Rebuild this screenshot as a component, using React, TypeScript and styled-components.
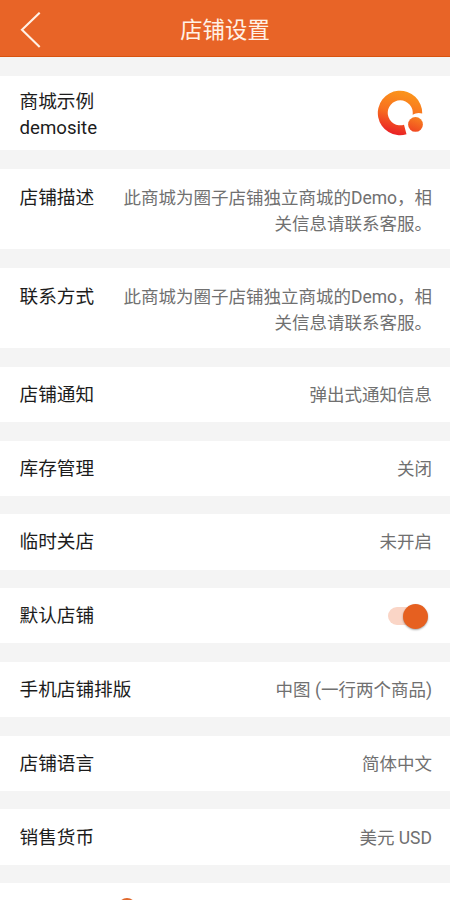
import React from 'react';
import styled, { createGlobalStyle } from 'styled-components';

const GlobalStyle = createGlobalStyle`
  html, body {
    margin: 0;
    height: 900px;
    overflow: hidden;
    background: #f4f4f4;
  }
  body {
    font-family: Roboto, 'Noto Sans CJK SC', sans-serif;
  }
`;

const Screen = styled.div`
  display: flex;
  flex-direction: column;
  width: 450px;
  height: 900px;
  overflow: hidden;
  background: #f4f4f4;
`;

const Header = styled.header`
  display: grid;
  grid-template-columns: 60px 1fr 60px;
  align-items: center;
  flex: none;
  box-sizing: border-box;
  height: 57px;
  padding-top: 4px;
  border-bottom: 1px solid #d8530f;
  background: #e86427;
  color: #fff1e6;
`;

const BackButton = styled.button`
  display: flex;
  padding: 0 0 0 20px;
  border: 0;
  background: none;
  color: inherit;
`;

const Title = styled.h1`
  margin: 0;
  font-size: 22.4px;
  font-weight: 400;
  line-height: 32px;
  text-align: center;
`;

const List = styled.main`
  display: flex;
  flex-direction: column;
  flex: none;
  gap: 18.6px;
  padding-top: 19.2px;
`;

const Row = styled.section<{ $height?: number; $top?: boolean }>`
  display: flex;
  align-items: ${({ $top }) => ($top ? 'flex-start' : 'center')};
  justify-content: space-between;
  gap: 24px;
  box-sizing: border-box;
  height: ${({ $height }) => $height ?? 55.2}px;
  padding: ${({ $top }) => ($top ? '16px' : '1px')} 18px 0 19.5px;
  background: #fff;
`;

const Label = styled.div`
  flex: none;
  font-size: 18.65px;
  line-height: 26px;
  color: #1c1c1c;
`;

const ShopName = styled(Label)`
  padding-top: 2px;
`;

const Value = styled.div`
  font-size: 17.5px;
  line-height: 26px;
  color: #707070;
  text-align: right;
`;

const Logo = styled.svg`
  flex: none;
  margin: 0 9px 2px 0;
`;

const Switch = styled.button`
  display: flex;
  align-items: center;
  margin-right: 4px;
  padding: 0;
  border: 0;
  background: none;
`;

const Track = styled.span`
  width: 28px;
  height: 18px;
  margin-right: -13px;
  border-radius: 9px;
  background: #fad5c6;
`;

const Thumb = styled.span`
  flex: none;
  width: 25px;
  height: 25px;
  border-radius: 50%;
  background: #e66020;
  box-shadow: 0 1px 2px rgba(0, 0, 0, 0.35);
`;

const NextRow = styled(Row)`
  align-items: flex-start;
  padding: 15px 0 0 118px;
`;

const Badge = styled.span`
  width: 18px;
  height: 18px;
  border-radius: 50%;
  background: #e0682c;
`;

const description = '此商城为圈子店铺独立商城的Demo，相关信息请联系客服。';

const settings = [
  ['店铺通知', '弹出式通知信息'],
  ['库存管理', '关闭'],
  ['临时关店', '未开启'],
  ['默认店铺', null],
  ['手机店铺排版', '中图 (一行两个商品)'],
  ['店铺语言', '简体中文'],
  ['销售货币', '美元 USD'],
] as const;

function ShopLogo() {
  return (
    <Logo width="46" height="46" viewBox="0 0 46 46" aria-hidden="true">
      <defs>
        <linearGradient id="ring" x1="0.65" y1="0" x2="0.4" y2="1">
          <stop offset="0" stopColor="#fb971b" />
          <stop offset="0.5" stopColor="#f8711f" />
          <stop offset="1" stopColor="#e91f25" />
        </linearGradient>
        <linearGradient id="dot" x1="0.7" y1="0" x2="0.3" y2="1">
          <stop offset="0" stopColor="#f88220" />
          <stop offset="1" stopColor="#f04521" />
        </linearGradient>
      </defs>
      <path
        d="M45.2 23.5A22.2 22.2 0 1 0 29.5 44.2L27 34.7A12.5 12.5 0 1 1 35.6 24.7Q40 22.2 45.2 23.5Z"
        fill="url(#ring)"
      />
      <circle cx="38.5" cy="34.4" r="7.4" fill="url(#dot)" />
    </Logo>
  );
}

export default function App() {
  return (
    <>
      <GlobalStyle />
      <Screen>
        <Header>
          <BackButton aria-label="返回">
            <svg width="22" height="36" viewBox="0 0 22 36" fill="none" stroke="currentColor" strokeWidth="2.1">
              <path d="M19.7 0.7 2 17.8 19.7 34.9" />
            </svg>
          </BackButton>
          <Title>店铺设置</Title>
        </Header>
        <List>
          <Row $height={74.2}>
            <ShopName>
              商城示例
              <br />
              demosite
            </ShopName>
            <ShopLogo />
          </Row>
          <Row $height={80.1} $top>
            <Label>店铺描述</Label>
            <Value>{description}</Value>
          </Row>
          <Row $height={80.5} $top>
            <Label>联系方式</Label>
            <Value>{description}</Value>
          </Row>
          {settings.map(([label, value]) => (
            <Row key={label}>
              <Label>{label}</Label>
              {value === null ? (
                <Switch role="switch" aria-checked="true" aria-label={label}>
                  <Track />
                  <Thumb />
                </Switch>
              ) : (
                <Value>{value}</Value>
              )}
            </Row>
          ))}
          <NextRow>
            <Badge />
          </NextRow>
        </List>
      </Screen>
    </>
  );
}
